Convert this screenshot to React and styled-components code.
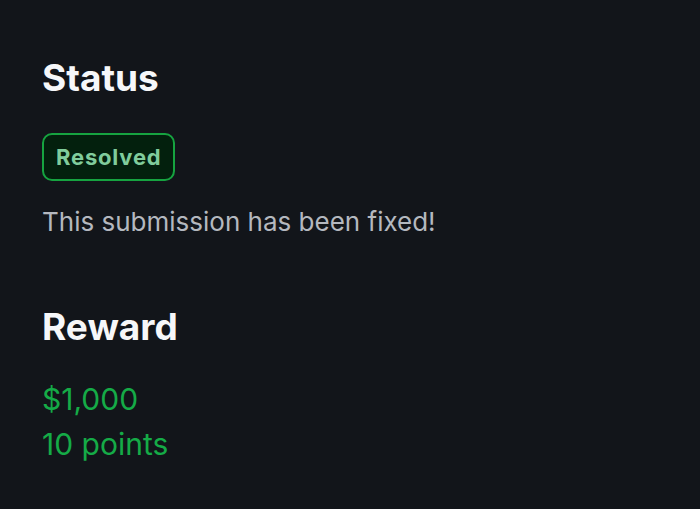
import React from "react";
import styled, { createGlobalStyle } from "styled-components";

const Global = createGlobalStyle`
  html, body { margin: 0; padding: 0; background: #12151a; }
  body { font-family: Inter, "Noto Sans", sans-serif; }
`;

const Page = styled.main`
  min-height: 509px;
  box-sizing: border-box;
  padding: 56px 42px 40px;
  background: #12151a;
  display: flex;
  flex-direction: column;
`;

const Section = styled.section`
  display: flex;
  flex-direction: column;
  align-items: flex-start;
  margin-bottom: ${(p) => p.$gap || 0}px;
`;

const Heading = styled.h2`
  margin: 0;
  font-size: 37px;
  line-height: 44px;
  font-weight: 700;
  color: #f6f7f9;
`;

const Badge = styled.span`
  margin-top: 33px;
  display: inline-flex;
  align-items: center;
  height: 48px;
  box-sizing: border-box;
  padding: 0 12px;
  border: 2px solid #16a340;
  border-radius: 10px;
  background: #03200d;
  color: #80cc9c;
  font-size: 22px;
  font-weight: 700;
  letter-spacing: 0.8px;
`;

const Text = styled.p`
  margin: 23px 0 0;
  font-size: 26px;
  line-height: 36px;
  color: #b4b8bf;
`;

const Value = styled.div`
  font-size: 30px;
  line-height: 45px;
  color: #15ab47;
`;

const Values = styled.div`
  margin-top: 28px;
  display: flex;
  flex-direction: column;
`;

export default function App() {
  return (
    <>
      <Global />
      <Page>
        <Section $gap={65}>
          <Heading>Status</Heading>
          <Badge>Resolved</Badge>
          <Text>This submission has been fixed!</Text>
        </Section>
        <Section>
          <Heading>Reward</Heading>
          <Values>
            <Value>$1,000</Value>
            <Value>10 points</Value>
          </Values>
        </Section>
      </Page>
    </>
  );
}
